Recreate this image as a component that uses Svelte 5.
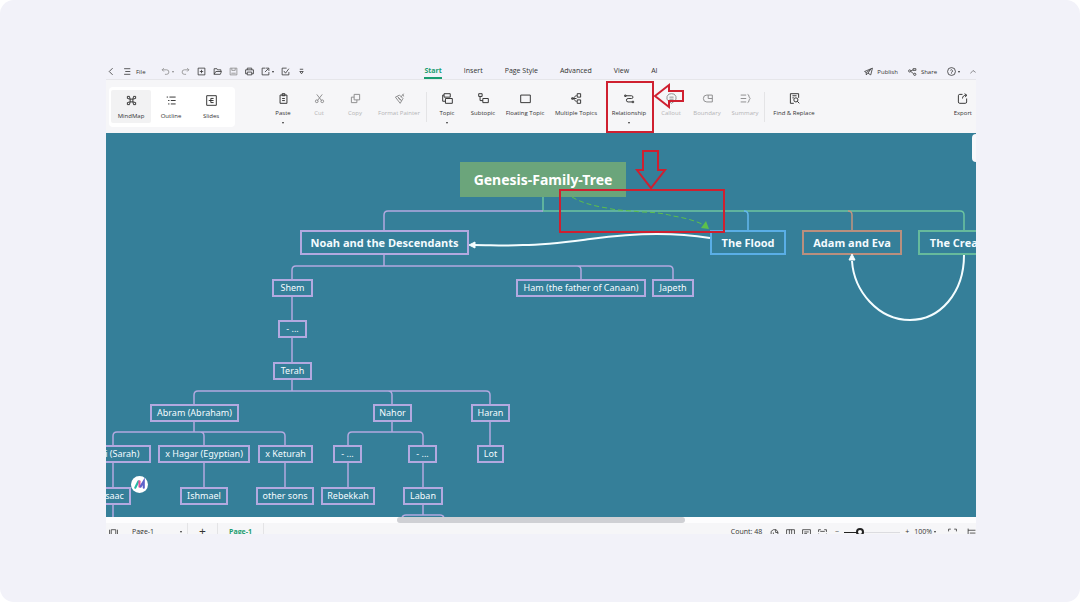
<script lang="ts">
	const icons: Record<string, string> = {
		back: 'M10 2L4 8l6 6',
		menu: 'M2 3h11M4 8h9M2 13h11',
		undo: 'M5 2L2 5l3 3M2 5h8a4 4 0 0 1 0 8H7',
		redo: 'M11 2l3 3-3 3M14 5H6a4 4 0 0 0 0 8h3',
		add: 'M2 2h12v12H2zM8 5v6M5 8h6',
		open: 'M2 13V3h5l1 2h6v3M2 13l3-5h10l-2 5z',
		save: 'M2 2h12v12H2zM5 2v4h6V2M4 11h8',
		print: 'M4 5V2h8v3M4 12H1V5h14v7h-3M4 9h8v5H4z',
		send: 'M8 2H2v12h12V9M7 9l6-6M9 2h5v5',
		check: 'M10 2H2v12h12V9M5 7l3 4 6-8',
		more: 'M5 4h6M5 8l3 4 3-4z',
		mindmap: 'M6 6h4v4H6zM6 6L2 5V2h3l1 4M10 6l1-4h3v3l-4 1M6 10l-1 4H2v-3l4-1M10 10l4 1v3h-3l-1-4',
		outline: 'M1 3h2M5 3h9M3 8h2M7 8h7M3 13h2M7 13h7',
		slides: 'M1 1h14v14H1zM4 8h4M7 5v6M7 5h4M7 8h4M7 11h4',
		paste: 'M3 3h10v12H3zM6 1h4v3H6zM6 8h4M6 11h4',
		cut: 'M4 2l7 9M12 2L5 11M2 12a2 2 0 1 0 4 0a2 2 0 1 0-4 0M10 12a2 2 0 1 0 4 0a2 2 0 1 0-4 0',
		copy: 'M6 2h8v8H6zM6 6H2v8h8v-4',
		painter: 'M14 1l-4 5M2 6l6-3 5 5-4 7zM5 5l6 6M6 7l4 4M13 2l1 3',
		topic: 'M3 1h9v5H3zM5 8h10v7H5zM3 3H1v9h4',
		subtopic: 'M1 1h5v4H1zM7 8h8v6H7zM3 5v6h4',
		floating: 'M1 3h14v11H1z',
		multiple: 'M3 8l5-5M3 8l5 5M3 8h5M9 1h5v5H9zM9 10h5v5H9zM1 7h2v2H1z',
		relationship: 'M3 4h8a2 2 0 0 1 0 4H6a2 2 0 0 0 0 5h6M1 3h2v2H1zM12 12h2v2h-2z',
		callout: 'M8 1a6 6 0 0 1 4 11l-4 3-4-3A6 6 0 0 1 8 1zM5 6h6M5 9h6',
		boundary: 'M7 3h8v10H7a5 5 0 0 1 0-10zM9 3v5h6',
		summary: 'M1 3h8M1 8h8M1 13h8M11 2c3 0 1 5 4 6c-3 1-1 6-4 6',
		find: 'M7 15H2V1h12v6M5 4h6M5 7h2M7 10a3 3 0 1 0 6 0a3 3 0 1 0-6 0M12 12l3 3',
		export: 'M8 2H4a2 2 0 0 0-2 2v9a2 2 0 0 0 2 2h8a2 2 0 0 0 2-2V8M8 8c0-3 2-5 6-5M11 1l3 2-2 3',
		publish: 'M1 8l14-6-3 12-5-3-3 3v-4zM4 10l8-6-5 7',
		share: 'M1 7a2 2 0 1 0 4 0a2 2 0 1 0-4 0M9 3h5v3H9zM10 13a2 2 0 1 0 4 0a2 2 0 1 0-4 0M5 7l4-2M5 8l5 4',
		help: 'M1 8a7 7 0 1 0 14 0a7 7 0 1 0-14 0M6 6a2 2 0 1 1 2 3v1M8 11v1',
		collapse: 'M1 12l7-8 7 5',
		panel: 'M4 3h8v11H4zM1 3v11M15 3v11',
		hand: 'M2 14V6l4-3h5l3 4v7M6 14V8M10 3v5h4',
		columns: 'M1 3h14v11H1zM6 3v11M10 3v11',
		layout: 'M1 3h14v11H1zM4 7h8M4 10h5',
		fit: 'M1 7V3h4M11 3h4v4M1 10v4h4M11 14h4v-4M4 6h8',
		full: 'M1 6V2h4M11 2h4v4M1 11v4h4M11 15h4v-4',
		panes: 'M2 1v14M2 4h13M5 9h10'
	};

	const quickActions = [
		{ icon: 'undo', label: 'Undo', caret: true, muted: true },
		{ icon: 'redo', label: 'Redo', muted: true },
		{ icon: 'add', label: 'New' },
		{ icon: 'open', label: 'Open' },
		{ icon: 'save', label: 'Save', muted: true },
		{ icon: 'print', label: 'Print' },
		{ icon: 'send', label: 'Send', caret: true },
		{ icon: 'check', label: 'Review' },
		{ icon: 'more', label: 'More' }
	];

	const tabs = ['Start', 'Insert', 'Page Style', 'Advanced', 'View', 'AI'];
	const modes = [
		{ icon: 'mindmap', label: 'MindMap' },
		{ icon: 'outline', label: 'Outline' },
		{ icon: 'slides', label: 'Slides' }
	];

	const toolGroups = [
		[
			{ icon: 'paste', label: 'Paste', width: 36, caret: true },
			{ icon: 'cut', label: 'Cut', width: 36, disabled: true },
			{ icon: 'copy', label: 'Copy', width: 36, disabled: true },
			{ icon: 'painter', label: 'Format Painter', width: 52, disabled: true }
		],
		[
			{ icon: 'topic', label: 'Topic', width: 36, caret: true },
			{ icon: 'subtopic', label: 'Subtopic', width: 36 },
			{ icon: 'floating', label: 'Floating Topic', width: 48 },
			{ icon: 'multiple', label: 'Multiple Topics', width: 54 },
			{ icon: 'relationship', label: 'Relationship', width: 52, caret: true },
			{ icon: 'callout', label: 'Callout', width: 32, disabled: true },
			{ icon: 'boundary', label: 'Boundary', width: 40, disabled: true },
			{ icon: 'summary', label: 'Summary', width: 36, disabled: true }
		],
		[{ icon: 'find', label: 'Find & Replace', width: 54 }]
	];

	let activeTab = $state('Start');
	let activeMode = $state('MindMap');
	let zoom = $state(25);

	type Topic = { text: string; x: number; y: number; w: number; kind?: string };

	const topics: Topic[] = [
		{ text: 'Genesis-Family-Tree', x: 354, y: 29, w: 166, kind: 'root' },
		{ text: 'Noah and the Descendants', x: 194, y: 97, w: 169, kind: 'main' },
		{ text: 'The Flood', x: 604, y: 97, w: 76, kind: 'main blue' },
		{ text: 'Adam and Eva', x: 696, y: 97, w: 100, kind: 'main orange' },
		{ text: 'The Creation', x: 812, y: 97, w: 94, kind: 'main green' },
		{ text: 'Shem', x: 166, y: 146, w: 41 },
		{ text: 'Ham (the father of Canaan)', x: 410, y: 146, w: 130 },
		{ text: 'Japeth', x: 546, y: 146, w: 42 },
		{ text: '- ...', x: 172, y: 187, w: 29 },
		{ text: 'Terah', x: 167, y: 229, w: 39 },
		{ text: 'Abram (Abraham)', x: 44, y: 271, w: 89 },
		{ text: 'Nahor', x: 267, y: 271, w: 39 },
		{ text: 'Haran', x: 365, y: 271, w: 39 },
		{ text: 'Sarai (Sarah)', x: -31, y: 312, w: 76 },
		{ text: 'x Hagar (Egyptian)', x: 52, y: 312, w: 92 },
		{ text: 'x Keturah', x: 152, y: 312, w: 55 },
		{ text: '- ...', x: 227, y: 312, w: 29 },
		{ text: '- ...', x: 302, y: 312, w: 29 },
		{ text: 'Lot', x: 371, y: 312, w: 27 },
		{ text: 'Isaac', x: -11, y: 354, w: 36 },
		{ text: 'Ishmael', x: 74, y: 354, w: 48 },
		{ text: 'other sons', x: 150, y: 354, w: 58 },
		{ text: 'Rebekkah', x: 215, y: 354, w: 54 },
		{ text: 'Laban', x: 297, y: 354, w: 40 }
	];

	// family links below Noah, all in the same lavender
	const links = [
		'M437 78H282q-4 0-4 4V97M278 122v11M186 146v-9q0-4 4-4H563q4 0 4 4v9M471 133q4 0 4 4v9',
		'M186 164v23M186 205v24M186 247v11M88 271v-9q0-4 4-4H380q4 0 4 4v9M282 258q4 0 4 4v9',
		'M88 289v10M7 312v-9q0-4 4-4H175q4 0 4 4v9M94 299q4 0 4 4v9',
		'M286 289v10M242 312v-9q0-4 4-4H313q4 0 4 4v9M384 289v23',
		'M7 330v24M98 330v24M179 330v24M242 330v24M317 330v24M7 372v14',
		'M317 372v10M296 386q0-4 4-4h34q4 0 4 4'
	];
</script>

{#snippet icon(name: string, size = 'small')}
	<svg class="icon {size}" viewBox="0 0 16 16" aria-hidden="true"><path d={icons[name]} /></svg>
{/snippet}

<div class="page">
	<div class="window">
		<header class="titlebar">
			<div class="quick">
				<button class="icon-btn" aria-label="Back">{@render icon('back')}</button>
				<button class="file">{@render icon('menu')}File</button>
				{#each quickActions as action (action.icon)}
					<button class="icon-btn" class:muted={action.muted} aria-label={action.label}>
						{@render icon(action.icon)}
						{#if action.caret}<span class="caret"></span>{/if}
					</button>
				{/each}
			</div>
			<nav class="tabs">
				{#each tabs as tab (tab)}
					<button class="tab" class:active={tab === activeTab} onclick={() => (activeTab = tab)}>{tab}</button>
				{/each}
			</nav>
			<div class="account">
				<button class="file">{@render icon('publish')}Publish</button>
				<button class="file">{@render icon('share')}Share</button>
				<button class="icon-btn" aria-label="Help">{@render icon('help')}<span class="caret"></span></button>
				<button class="icon-btn" aria-label="Collapse ribbon">{@render icon('collapse', 'tiny')}</button>
			</div>
		</header>

		<div class="ribbon">
			<div class="modes">
				{#each modes as mode (mode.label)}
					<button class="mode" class:active={mode.label === activeMode} onclick={() => (activeMode = mode.label)}>
						{@render icon(mode.icon, 'large')}
						{mode.label}
					</button>
				{/each}
			</div>
			<div class="tools">
				{#each toolGroups as group, i (i)}
					<div class="group">
						{#each group as tool (tool.label)}
							<button class="tool" style:width="{tool.width}px" disabled={tool.disabled}>
								{@render icon(tool.icon, 'large')}
								{tool.label}
								{#if tool.caret}<span class="caret"></span>{/if}
							</button>
						{/each}
					</div>
				{/each}
			</div>
			<button class="tool export">{@render icon('export', 'large')}Export</button>
		</div>

		<main class="canvas">
			<svg class="links" aria-hidden="true">
				<g class="link green"><path d="M437 64v14H854q4 0 4 4v15" /></g>
				<g class="link blue"><path d="M638 78q4 0 4 4v15" /></g>
				<g class="link orange"><path d="M742 78q4 0 4 4v15" /></g>
				<g class="link">
					{#each links as d (d)}<path {d} />{/each}
				</g>
			</svg>

			{#each topics as topic, i (i)}
				<div class="topic {topic.kind ?? ''}" style:left="{topic.x}px" style:top="{topic.y}px" style:width="{topic.w}px">
					{topic.text}
				</div>
			{/each}

			<svg class="links" aria-hidden="true">
				<g class="relation">
					<path d="M604 105C585 102 568 101 551 101C528 101 507 103 484 106S440 112 417 112C400 113 385 112 368 112" />
					<path class="head" d="M363 112l6-3v6z" />
					<path d="M858 122C858 160 834 187 804 187C772 187 748 158 746 128" />
					<path class="head" d="M746 121l-3 6h6z" />
				</g>
				<g class="relation new">
					<path d="M466 64C476 70 488 73 501 75C512 78 523 77 534 79C550 79 560 81 567 83C580 85 590 88 598 92" />
					<path class="head" d="M603 96l-8-1 5-7z" />
				</g>
			</svg>

			<button class="assistant" aria-label="Assistant">
				<svg viewBox="0 0 16 16" aria-hidden="true">
					<path class="teal" d="M4 11L7 5" />
					<path class="pink" d="M8 5v5" />
					<path class="violet" d="M9 10l3-5v6" />
				</svg>
			</button>
			<div class="side-panel"></div>
		</main>

		<div class="scroll-track"><div class="scroll-thumb"></div></div>

		<footer class="statusbar">
			<button class="icon-btn" aria-label="Pages">{@render icon('panel')}</button>
			<label class="page-select">
				<select aria-label="Page"><option>Page-1</option></select>
				<span class="caret"></span>
			</label>
			<button class="icon-btn new-page" aria-label="New page">+</button>
			<button class="page-tab">Page-1</button>
			<span class="count">Count: 48</span>
			<div class="views">
				<button class="icon-btn" aria-label="Pan">{@render icon('hand')}</button>
				<button class="icon-btn" aria-label="Columns">{@render icon('columns')}</button>
				<button class="icon-btn" aria-label="Layout">{@render icon('layout')}</button>
				<button class="icon-btn" aria-label="Fit">{@render icon('fit')}</button>
			</div>
			<div class="zoom">
				<button class="icon-btn" aria-label="Zoom out">−</button>
				<input type="range" aria-label="Zoom" min="0" max="100" bind:value={zoom} style:--fill="{zoom}%" />
				<button class="icon-btn" aria-label="Zoom in">+</button>
				<button class="icon-btn">100%<span class="caret"></span></button>
			</div>
			<button class="icon-btn" aria-label="Full screen">{@render icon('full')}</button>
			<button class="icon-btn" aria-label="Panes">{@render icon('panes')}</button>
		</footer>

		<svg class="marks" aria-hidden="true">
			<path d="M501 20h46v50h-46zM454 128h164v42H454z" />
			<path d="M549 34l14-11v6h14v10h-14v6z" />
			<path d="M537 89h15v19h7l-14 18-14-18h6z" />
		</svg>
	</div>
</div>

<style>
	:global(body) {
		margin: 0;
		background: #fff;
	}

	.page {
		box-sizing: border-box;
		display: flex;
		min-height: 100vh;
		padding: 62px 104px 68px 106px;
		border-radius: 14px;
		background: #f2f2f9;
		font-family: 'Open Sans', 'Noto Sans', sans-serif;
		font-size: 6px;
		color: #333;
	}

	.window {
		position: relative;
		display: flex;
		flex: 1;
		flex-direction: column;
		min-width: 0;
		overflow: hidden;
	}

	button,
	select {
		padding: 0;
		border: 0;
		background: none;
		color: inherit;
		font: inherit;
	}

	.icon {
		display: block;
		flex: none;
		fill: none;
		stroke: currentColor;
		stroke-width: 1.4;
	}

	.tiny {
		width: 6px;
		height: 6px;
	}

	.small {
		width: 9px;
		height: 9px;
	}

	.large {
		width: 11px;
		height: 11px;
	}

	.caret {
		border: 1px solid transparent;
		border-top: 2px solid currentColor;
		border-bottom: 0;
	}

	.titlebar {
		display: grid;
		grid-template-columns: 1fr auto 1fr;
		align-items: center;
		box-sizing: border-box;
		height: 18px;
		padding-top: 2px;
		border-bottom: 1px solid #e6e6ea;
	}

	.quick,
	.account,
	.icon-btn,
	.file {
		display: flex;
		align-items: center;
	}

	.quick {
		gap: 7px;
		padding-left: 1px;
	}

	.quick .file {
		margin-right: 8px;
	}

	.icon-btn {
		gap: 2px;
	}

	.file {
		gap: 4px;
	}

	.muted {
		color: #888;
	}

	.account {
		justify-content: flex-end;
		gap: 10px;
	}

	.tabs {
		display: flex;
		gap: 22px;
		align-self: stretch;
		font-size: 7px;
	}

	.tab {
		border-bottom: 2px solid transparent;
	}

	.tab.active {
		border-color: #1a9d70;
		color: #1a9d70;
		font-weight: 700;
	}

	.ribbon {
		display: flex;
		height: 53px;
		background: #f6f6f8;
	}

	.modes {
		display: flex;
		align-self: flex-start;
		box-sizing: border-box;
		height: 40px;
		margin: 7px 30px 0 3px;
		padding: 3px 4px 4px 2px;
		border-radius: 4px;
		background: #fff;
	}

	.mode,
	.tool {
		display: flex;
		flex-direction: column;
		align-items: center;
		gap: 5px;
		line-height: 8px;
		white-space: nowrap;
	}

	.mode {
		gap: 6px;
		width: 40px;
		padding-top: 5px;
	}

	.mode.active {
		border-radius: 2px;
		background: #f2f2f3;
	}

	.tools,
	.group {
		display: flex;
	}

	.group + .group::before {
		width: 1px;
		height: 30px;
		margin: 12px 2px 0 1px;
		background: #e4e4e6;
		content: '';
	}

	.tool {
		padding-top: 13px;
	}

	.tool:disabled {
		color: #b4b4b6;
	}

	.tool:disabled .icon {
		color: #8c8c8e;
	}

	.export {
		margin: 0 4px 0 auto;
	}

	.canvas {
		position: relative;
		flex: 1;
		overflow: hidden;
		background: #357f99;
	}

	.links,
	.marks {
		position: absolute;
		inset: 0;
		width: 100%;
		height: 100%;
		fill: none;
		pointer-events: none;
	}

	.link {
		stroke: #b3a9e0;
		stroke-width: 1.5;
	}

	.link.green {
		stroke: #6dc5a0;
	}

	.link.blue {
		stroke: #64b9ee;
	}

	.link.orange {
		stroke: #c4957f;
	}

	.topic {
		position: absolute;
		display: flex;
		box-sizing: border-box;
		align-items: center;
		justify-content: center;
		height: 18px;
		border: 2px solid #b3a9e0;
		color: #f4fbff;
		font-family: 'Noto Sans', 'Open Sans', sans-serif;
		font-size: 9px;
		line-height: 12px;
		white-space: nowrap;
	}

	.topic.main {
		height: 25px;
		font-family: 'Open Sans', 'Noto Sans', sans-serif;
		font-size: 11px;
		font-weight: 700;
	}

	.topic.root {
		height: 35px;
		border: 0;
		background: #6ba57b;
		color: #fff;
		font-size: 14px;
		font-weight: 700;
	}

	.topic.blue {
		border-color: #5aaee6;
	}

	.topic.orange {
		border-color: #b98f7e;
	}

	.topic.green {
		border-color: #66ba9c;
	}

	.relation {
		stroke: #f4fdff;
		stroke-width: 2;
	}

	.relation .head {
		fill: #f4fdff;
		stroke-width: 1;
	}

	.relation.new {
		stroke: #5cc04a;
		stroke-width: 1;
		stroke-dasharray: 5 3;
	}

	.new .head {
		fill: #5cc04a;
		stroke: none;
	}

	.assistant {
		position: absolute;
		top: 343px;
		left: 25px;
		width: 17px;
		height: 17px;
		border-radius: 50%;
		background: #fff;
	}

	.assistant svg {
		display: block;
		fill: none;
		stroke-linecap: round;
		stroke-width: 2;
	}

	.teal {
		stroke: #27b8a5;
	}

	.pink {
		stroke: #e5559c;
	}

	.violet {
		stroke: #5d62c9;
	}

	.side-panel {
		position: absolute;
		top: 1px;
		right: 0;
		width: 4px;
		height: 28px;
		border-radius: 4px 0 0 4px;
		background: #f8f8fb;
	}

	.scroll-track {
		display: flex;
		height: 6px;
		background: #fdfdfe;
	}

	.scroll-thumb {
		width: 33%;
		margin: 0 auto;
		border-radius: 3px;
		background: #cfd0d4;
	}

	.statusbar {
		display: flex;
		align-items: flex-start;
		height: 11px;
		overflow: hidden;
		background: #f6f6f8;
		font-size: 7px;
		line-height: 18px;
	}

	.statusbar > :first-child {
		margin: 0 14px 0 3px;
	}

	.statusbar .icon-btn {
		height: 18px;
	}

	.page-select {
		display: flex;
		align-items: center;
		justify-content: space-between;
		width: 50px;
		padding-right: 5px;
		border-right: 1px solid #e4e4e6;
	}

	.page-select select {
		appearance: none;
		line-height: 18px;
	}

	.statusbar .new-page {
		justify-content: center;
		width: 30px;
		border-right: 1px solid #e4e4e6;
		font-size: 12px;
	}

	.page-tab {
		width: 46px;
		border-right: 1px solid #e4e4e6;
		color: #1a9d70;
		font-weight: 700;
		line-height: 18px;
	}

	.count {
		margin: 0 8px 0 auto;
	}

	.views {
		display: flex;
		gap: 7px;
		margin-right: 8px;
	}

	.zoom {
		display: flex;
		align-items: center;
		gap: 5px;
		height: 18px;
		margin-right: 12px;
	}

	.zoom input {
		width: 56px;
		height: 8px;
		margin: 0;
		appearance: none;
		background: linear-gradient(to right, #222 var(--fill), #dcdce0 var(--fill)) center / 100% 1px no-repeat;
	}

	.zoom input::-webkit-slider-thumb {
		box-sizing: border-box;
		width: 8px;
		height: 8px;
		appearance: none;
		border: 2px solid #222;
		border-radius: 50%;
		background: #fff;
	}

	.statusbar > :last-child {
		margin-left: 10px;
	}

	.marks path {
		stroke: #cf2030;
		stroke-width: 2;
	}
</style>
